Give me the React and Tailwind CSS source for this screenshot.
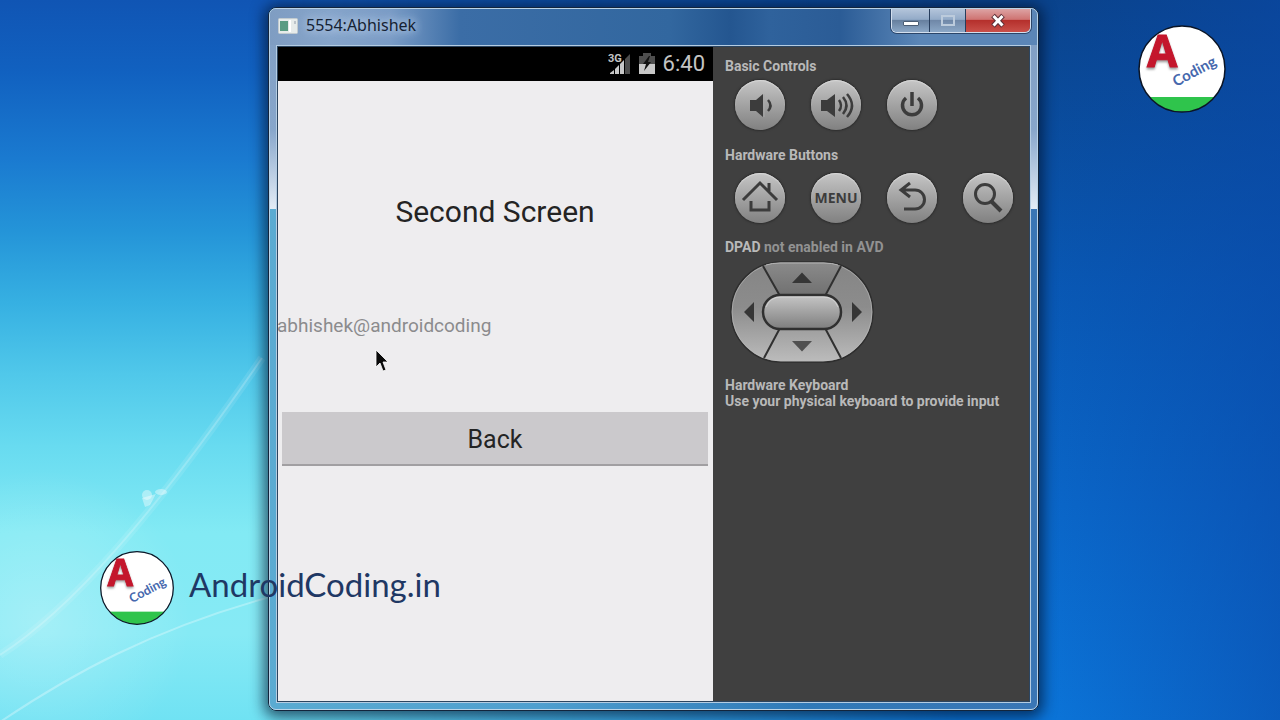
import React from "react";

function Wallpaper() {
  return (
    <svg
      className="absolute inset-0 h-full w-full"
      viewBox="0 0 1280 720"
      preserveAspectRatio="none"
      aria-hidden="true"
    >
      <defs>
        <linearGradient id="skyLeft" x1="0" y1="0" x2="0" y2="1">
          <stop offset="0" stopColor="#1055b4" />
          <stop offset="0.1" stopColor="#1161c0" />
          <stop offset="0.22" stopColor="#1a7ad0" />
          <stop offset="0.32" stopColor="#2494d8" />
          <stop offset="0.42" stopColor="#36b0e2" />
          <stop offset="0.52" stopColor="#50c8ea" />
          <stop offset="0.62" stopColor="#68dbf0" />
          <stop offset="0.74" stopColor="#82eaf4" />
          <stop offset="0.88" stopColor="#86eaf5" />
          <stop offset="1" stopColor="#70e2f3" />
        </linearGradient>
        <linearGradient id="skyRight" x1="0" y1="0" x2="0" y2="1">
          <stop offset="0" stopColor="#0a438c" />
          <stop offset="0.4" stopColor="#0958b4" />
          <stop offset="0.7" stopColor="#0a66c8" />
          <stop offset="1" stopColor="#0b74d8" />
        </linearGradient>
        <linearGradient id="fade" x1="0" y1="0" x2="1" y2="0">
          <stop offset="0.2" stopColor="#fff" />
          <stop offset="0.75" stopColor="#000" />
        </linearGradient>
        <mask id="leftMask">
          <rect width="1280" height="720" fill="url(#fade)" />
        </mask>
        <linearGradient id="shade" x1="0" y1="0" x2="1" y2="0">
          <stop offset="0.82" stopColor="#0a48a8" stopOpacity="0" />
          <stop offset="1" stopColor="#0a48a8" stopOpacity="0.55" />
        </linearGradient>
        <radialGradient id="glow" gradientUnits="userSpaceOnUse" cx="40" cy="620" r="150">
          <stop offset="0" stopColor="#fff" stopOpacity="0.25" />
          <stop offset="1" stopColor="#fff" stopOpacity="0" />
        </radialGradient>
      </defs>
      <rect width="1280" height="720" fill="url(#skyRight)" />
      <rect width="1280" height="720" fill="url(#shade)" />
      <rect width="1280" height="720" fill="url(#skyLeft)" mask="url(#leftMask)" />
      <rect width="280" height="720" fill="url(#glow)" />
      <path d="M0 655C70 610 150 520 262 358" fill="none" stroke="#fff" strokeOpacity="0.1" strokeWidth="8" />
      <path d="M0 655C70 610 150 520 262 358" fill="none" stroke="#fff" strokeOpacity="0.2" strokeWidth="2" />
      <path d="M0 722C70 675 150 630 270 597" fill="none" stroke="#fff" strokeOpacity="0.3" strokeWidth="2" />
      <g fill="#fff" fillOpacity="0.4">
        <ellipse cx="147" cy="495" rx="5" ry="5" />
        <ellipse cx="161" cy="492" rx="6" ry="3" />
        <path d="M142 498L156 494L150 505L145 507Z" />
      </g>
    </svg>
  );
}

function Logo({ className }) {
  return (
    <svg className={className} viewBox="0 0 90 90" role="img" aria-label="A Coding">
      <defs>
        <clipPath id="logoClip">
          <circle cx="45" cy="45" r="43" />
        </clipPath>
      </defs>
      <circle cx="45" cy="45" r="43" fill="#fff" />
      <rect x="0" y="73" width="90" height="17" fill="#2fc44c" clipPath="url(#logoClip)" />
      <circle cx="45" cy="45" r="43" fill="none" stroke="#0b1526" strokeWidth="1.5" />
      <text x="10" y="43" fontSize="44" className="font-['Open_Sans',sans-serif] font-bold drop-shadow-[0_2px_1px_rgba(90,90,90,0.6)]" fill="#c4162c" stroke="#c4162c" strokeWidth="1">A</text>
      <text transform="translate(39 63) rotate(-28)" fontSize="15" className="font-[Lato,sans-serif] font-bold" fill="#4668ad">Coding</text>
    </svg>
  );
}

function RoundButton({ label, children }) {
  return (
    <button
      type="button"
      aria-label={label}
      className="flex size-[50px] items-center justify-center rounded-full bg-linear-to-b from-[#c6c6c6] to-[#818181] text-[#3c3c3c] shadow-[0_0_2px_1px_#2c2c2c,inset_0_1px_1px_#d8d8d8]"
    >
      {children}
    </button>
  );
}

function Stroke({ children }) {
  return (
    <svg className="size-[50px]" viewBox="0 0 50 50" fill="none" stroke="currentColor" strokeWidth="3" aria-hidden="true">
      {children}
    </svg>
  );
}

function Dpad() {
  return (
    <div className="relative mt-1.5 ml-[5px] h-[102px] w-36">
      <svg className="absolute inset-0 h-full w-full" viewBox="0 0 144 102" aria-hidden="true">
        <defs>
          <linearGradient id="padFill" x1="0" y1="0" x2="0" y2="1">
            <stop offset="0" stopColor="#858585" />
            <stop offset="0.45" stopColor="#8c8c8c" />
            <stop offset="1" stopColor="#bcbcbc" />
          </linearGradient>
          <linearGradient id="pill" x1="0" y1="0" x2="0" y2="1">
            <stop offset="0" stopColor="#c6c6c6" />
            <stop offset="1" stopColor="#7e7e7e" />
          </linearGradient>
          <linearGradient id="topKey" x1="0" y1="0" x2="0" y2="1">
            <stop offset="0" stopColor="#8a8a8a" />
            <stop offset="1" stopColor="#707070" />
          </linearGradient>
        </defs>
        <rect x="1" y="1" width="142" height="100" rx="50" fill="url(#padFill)" stroke="#2e2e2e" strokeWidth="1.5" />
        <rect x="2" y="2" width="140" height="98" rx="49" fill="none" stroke="#bdbdbd" strokeOpacity="0.6" />
        <path d="M34 5Q40 2 50 2H94Q104 2 110 5L94 35H50Z" fill="url(#topKey)" />
        <path d="M36 4Q42 2 50 2H94Q102 2 108 4" fill="none" stroke="#b4b4b4" />
        <path d="M33 5L50 35M111 5L95 35M50 67L34 97M95 67L111 97" stroke="#303030" strokeWidth="2" />
        <rect x="33" y="34" width="78" height="34" rx="17" fill="url(#pill)" stroke="#303030" strokeWidth="2.5" />
        <path d="M36 46Q40 36 51 36H93Q104 36 108 46" fill="none" stroke="#dcdcdc" strokeOpacity="0.7" />
        <path d="M62 22H82L72 11.500ZM24 41V61L14 51ZM122 41V61L132 51Z" fill="#363636" />
        <path d="M62 80H82L72 90.500Z" fill="#505050" />
      </svg>
      <div className="relative grid h-full grid-cols-[33px_1fr_33px] grid-rows-3">
        <button type="button" disabled aria-label="Left" className="row-span-3" />
        <button type="button" disabled aria-label="Up" />
        <button type="button" disabled aria-label="Right" className="row-span-3" />
        <button type="button" disabled aria-label="Center" />
        <button type="button" disabled aria-label="Down" />
      </div>
    </div>
  );
}

function TitleBar() {
  return (
    <header className="flex h-9 items-start bg-[linear-gradient(to_right,#7f9dc2_0px,#86a4ca_60px,#7a9cc6_120px,#3b6da6_190px,#32679f_400px,#245690_460px,#2f629c_500px,#2b5c96_570px,#5b86b7_650px)]">
      <svg className="mt-2 ml-2 size-5" viewBox="0 0 20 20" aria-hidden="true">
        <rect x="0.500" y="1.500" width="19" height="15" rx="1" fill="#e6ebea" stroke="#c2cbd0" />
        <rect x="2" y="4" width="8" height="10" fill="#5a9c83" />
        <path d="M12 3V15" stroke="#fff" strokeWidth="2" />
        <rect x="16" y="4" width="2" height="3" fill="#bcc4ca" />
      </svg>
      <h1 className="mt-1 ml-2 flex-1 font-['Noto_Sans',sans-serif] text-base leading-6 text-[#152233] [text-shadow:0_0_8px_#c9dbf0,0_0_12px_#b4cbe6]">
        5554:Abhishek
      </h1>
      <div className="mr-1.5 flex h-6 divide-x divide-[#263d5c] overflow-hidden rounded-b-md border border-t-0 border-[#d3dfee] shadow-[0_0_0_1px_#2b4569]">
        <button type="button" aria-label="Minimize" className="flex w-[38px] justify-center bg-[linear-gradient(#b3c4da,#93abc8_45%,#67809f_50%,#8ba7c6)] pt-3">
          <span className="h-[5px] w-4 rounded-[1px] border border-[#4b5d74] bg-white" />
        </button>
        <button type="button" aria-label="Maximize" className="flex w-9 justify-center bg-[linear-gradient(#b3c4da,#93abc8_45%,#7088a8_50%,#8ba7c6)] pt-1.5">
          <span className="h-[11px] w-3.5 border-2 border-[#bccbdc]" />
        </button>
        <button type="button" aria-label="Close" className="flex w-16 items-center justify-center bg-[linear-gradient(#dda3a4,#cf7472_45%,#b5302c_50%,#c9504a)]">
          <svg className="size-4" viewBox="0 0 16 16" aria-hidden="true">
            <path d="M3 2.500L13 13M13 2.500L3 13" stroke="#5d3038" strokeWidth="5" />
            <path d="M3.500 3L12.500 12.500M12.500 3L3.500 12.500" stroke="#fff" strokeWidth="3" />
          </svg>
        </button>
      </div>
    </header>
  );
}

function PhoneScreen() {
  return (
    <section className="flex min-w-0 flex-1 flex-col bg-[#eeedef] font-[Roboto,sans-serif]">
      <div className="flex h-[35px] items-center justify-end bg-black pr-2">
        <svg className="h-6 w-[23px]" viewBox="0 0 23 24" aria-hidden="true">
          <text x="0" y="10" fontSize="11" className="font-[Roboto,sans-serif] font-bold" fill="#c4c4c4">3G</text>
          <path d="M2 22V21L6 18V22ZM7 22V17L11 13V22ZM12 22V12L16 8V22Z" fill="#c8c8c8" />
          <path d="M17 22V7L22 2V22Z" fill="#4d4d4d" />
        </svg>
        <svg className="ml-2 h-[22px] w-4" viewBox="0 0 16 22" aria-hidden="true">
          <path d="M0 3H4V0H12V3H16V21H0Z" fill="#4e4e4e" />
          <path d="M0 11H16V21H0Z" fill="#c8c8c8" />
          <path d="M10 3L4 11H7L5 18L12 9H9L11 3Z" fill="#111" />
        </svg>
        <span className="ml-2 text-[22px] leading-8 text-[#c4c4c4]">6:40</span>
      </div>
      <h2 className="mt-[113px] text-center text-3xl leading-9 text-[#242424]">Second Screen</h2>
      <p className="mt-[84px] text-[19px] leading-6 text-[#8b8b8d]">abhishek@androidcoding</p>
      <button
        type="button"
        className="mx-[5px] mt-[74px] h-[54px] border-b-2 border-[#a19fa2] bg-[#cbc9cc] pt-1 text-[25px] leading-8 text-[#242424]"
      >
        Back
      </button>
    </section>
  );
}

function ControlPanel() {
  return (
    <aside className="w-[317px] shrink-0 bg-[#404040] px-3 pt-3 font-[Roboto,sans-serif] text-sm leading-4 font-bold text-[#b9b9b9]">
      <h2>Basic Controls</h2>
      <div className="mt-1.5 ml-2.5 flex gap-[26px]">
        <RoundButton label="Volume down">
          <Stroke>
            <path d="M15 20H21L28 14V37L21 31H15Z" fill="currentColor" stroke="none" />
            <path d="M29 14V37" stroke="#a8a8a8" strokeWidth="1" />
            <path d="M33 20Q38 25.500 33 31" strokeWidth="2.500" />
          </Stroke>
        </RoundButton>
        <RoundButton label="Volume up">
          <Stroke>
            <path d="M10 20H16L24 14V37L16 31H10Z" fill="currentColor" stroke="none" />
            <path d="M28 20Q32 25.500 28 31M32 17Q39 25.500 32 34M36 14Q46 25.500 36 37" strokeWidth="2.500" />
          </Stroke>
        </RoundButton>
        <RoundButton label="Power">
          <Stroke>
            <path d="M19 18A9.500 9.500 0 1 0 31 18M25 12V26" strokeWidth="3.500" />
          </Stroke>
        </RoundButton>
      </div>
      <h2 className="mt-[17px]">Hardware Buttons</h2>
      <div className="mt-2.5 ml-2.5 flex gap-[26px]">
        <RoundButton label="Home">
          <Stroke>
            <path d="M8 27L25 10L42 27M34 18V10M16 28V37H34V28" />
          </Stroke>
        </RoundButton>
        <RoundButton label="Menu">
          <span className="font-['Noto_Sans',sans-serif] text-sm leading-none font-bold">MENU</span>
        </RoundButton>
        <RoundButton label="Back">
          <Stroke>
            <path d="M23 10L14 17L23 24M15 17H28A9.500 9.500 0 0 1 28 36H17" />
          </Stroke>
        </RoundButton>
        <RoundButton label="Search">
          <Stroke>
            <circle cx="22" cy="21" r="9.500" />
            <path d="M28 28L38 38" strokeWidth="4" />
          </Stroke>
        </RoundButton>
      </div>
      <h2 className="mt-4">
        DPAD <span className="text-[#929292]">not enabled in AVD</span>
      </h2>
      <Dpad />
      <h2 className="mt-3.5">Hardware Keyboard</h2>
      <p>Use your physical keyboard to provide input</p>
    </aside>
  );
}

export default function App() {
  return (
    <main className="relative flex min-h-screen flex-col overflow-hidden bg-[#0a58b4] pt-[7px] pr-[241px] pb-[9px] pl-[268px]">
      <Wallpaper />
      <div className="relative flex flex-1 flex-col rounded-lg border border-[#13253c] bg-[linear-gradient(to_right,#5aabd2,#4f9fcf_35%,#2f79b8_70%,#3a76b5)] shadow-[0_2px_14px_4px_rgba(0,15,40,0.65)]">
        <div className="flex flex-1 flex-col rounded-[7px] border border-[#b9d3e8] bg-[linear-gradient(#7f9dc2,#87a6cb_60%,#e3ecf6)] bg-[length:100%_200px] bg-no-repeat px-1.5 pb-1.5">
          <div className="-mx-1.5 overflow-hidden rounded-t-md">
            <TitleBar />
          </div>
          <div className="flex flex-1 border border-[#b4cce2] outline-1 -outline-offset-2 outline-[#2c4560]">
            <PhoneScreen />
            <ControlPanel />
          </div>
        </div>
      </div>

      <Logo className="absolute top-6 right-[53px] size-[90px]" />
      <div className="absolute bottom-[94px] left-[99px] flex items-center gap-[14px]">
        <Logo className="size-[76px]" />
        <p className="pb-2 font-[Lato,sans-serif] text-[33px] leading-10 text-[#1f3864]">AndroidCoding.in</p>
      </div>
      <svg className="absolute top-[349px] left-[375px] h-6 w-4" viewBox="0 0 16 24" aria-hidden="true">
        <path d="M1 1V18L5 14L8 22L11 21L8 13H13Z" fill="#0a0a0a" stroke="#fff" strokeWidth="0.800" />
      </svg>
    </main>
  );
}
